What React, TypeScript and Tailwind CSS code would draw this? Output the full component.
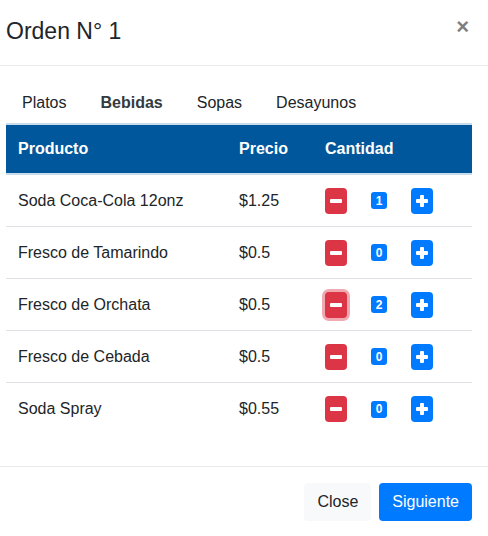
import React from "react";

const rows = [
  { name: "Soda Coca-Cola 12onz", price: "$1.25", qty: 1 },
  { name: "Fresco de Tamarindo", price: "$0.5", qty: 0 },
  { name: "Fresco de Orchata", price: "$0.5", qty: 2, focused: true },
  { name: "Fresco de Cebada", price: "$0.5", qty: 0 },
  { name: "Soda Spray", price: "$0.55", qty: 0 },
];

const tabs = ["Platos", "Bebidas", "Sopas", "Desayunos"];

function MinusIcon() {
  return (
    <svg width="12" height="12" viewBox="0 0 12 12">
      <rect x="0" y="4" width="12" height="4" rx="1" fill="white" />
    </svg>
  );
}

function PlusIcon() {
  return (
    <svg width="12" height="12" viewBox="0 0 12 12">
      <rect x="0" y="4" width="12" height="4" rx="1" fill="white" />
      <rect x="4" y="0" width="4" height="12" rx="1" fill="white" />
    </svg>
  );
}

export default function App() {
  return (
    <div
      className="w-[488px] h-[536px] bg-white text-[#212529] overflow-hidden flex flex-col"
      style={{ fontFamily: '"Liberation Sans", Arial, sans-serif' }}
    >
      {/* HEADER */}
      <div className="h-[66px] shrink-0 border-b border-[#e9ecef] flex items-start justify-between pl-[6px] pr-[19px] pt-[17px]">
        <h4 className="text-[23px] leading-[29px] font-normal">Orden N° 1</h4>
        <span className="text-[22px] leading-[22px] font-bold text-black opacity-50 mt-[-1px]">×</span>
      </div>

      {/* BODY */}
      <div className="h-[400px] shrink-0 px-[6px] pt-[17px]">
        <nav className="flex h-[40px] items-center text-[16px] ml-[-1px]">
          {tabs.map((t) => (
            <span
              key={t}
              className={t === "Bebidas" ? "px-[17px] font-bold text-[#343a40]" : "px-[17px] text-[#212529]"}
            >
              {t}
            </span>
          ))}
        </nav>

        <div className="w-[466px]">
          <div className="border-t-2 border-b-2 border-[#c9dcec] h-[52px] bg-[#01579b] text-white font-bold text-[16px] flex items-center">
            <div className="w-[221px] pl-3">Producto</div>
            <div className="w-[86px] pl-3">Precio</div>
            <div className="pl-3">Cantidad</div>
          </div>

          {rows.map((r, i) => (
            <div
              key={r.name}
              className={
                i < rows.length - 1
                  ? "h-[52px] flex items-center text-[16px] border-b border-[#dee2e6]"
                  : "h-[52px] flex items-center text-[16px]"
              }
            >
              <div className="w-[221px] pl-3">{r.name}</div>
              <div className="w-[86px] pl-3">{r.price}</div>
              <div className="pl-3 flex items-center">
                <button
                  className={
                    r.focused
                      ? "w-[22px] h-[26px] rounded-[4px] bg-[#dc3545] flex items-center justify-center shadow-[0_0_0_3px_rgba(225,83,97,0.5)]"
                      : "w-[22px] h-[26px] rounded-[4px] bg-[#dc3545] flex items-center justify-center"
                  }
                >
                  <MinusIcon />
                </button>
                <span className="ml-[24px] w-[16px] h-[17px] rounded-[3px] bg-[#007bff] text-white text-[12px] font-bold flex items-center justify-center">
                  {r.qty}
                </span>
                <button className="ml-[24px] w-[22px] h-[26px] rounded-[4px] bg-[#007bff] flex items-center justify-center">
                  <PlusIcon />
                </button>
              </div>
            </div>
          ))}
        </div>
      </div>

      {/* FOOTER */}
      <div className="border-t border-[#e9ecef] flex justify-end items-start gap-2 pr-[16px] pt-[16px] flex-1">
        <button className="h-[38px] px-[13px] rounded-[4px] bg-[#f8f9fa] text-[16px] text-[#212529]">Close</button>
        <button className="h-[38px] px-[13px] rounded-[4px] bg-[#007bff] text-[16px] text-white">Siguiente</button>
      </div>
    </div>
  );
}
